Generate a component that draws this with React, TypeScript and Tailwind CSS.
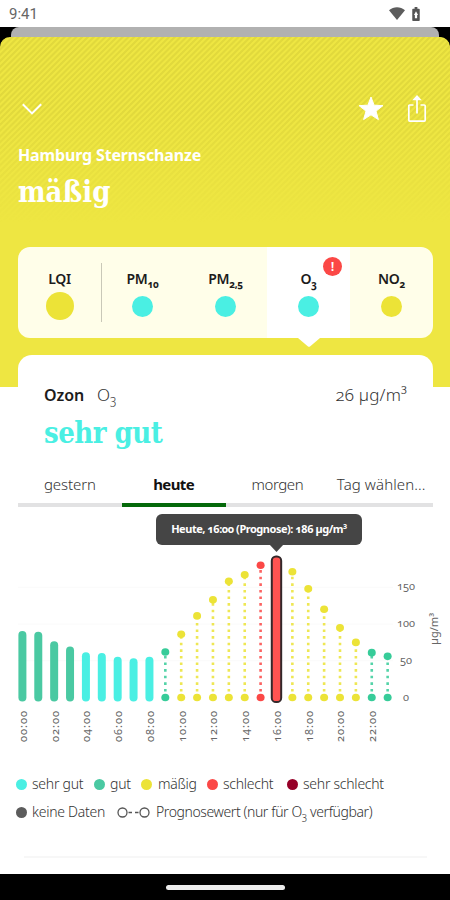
import { useState } from 'react'

type Level = 'sehrGut' | 'gut' | 'maessig' | 'schlecht' | 'sehrSchlecht'

const COLORS: Record<Level, string> = {
  sehrGut: '#4aefe3',
  gut: '#4ac9a2',
  maessig: '#ece337',
  schlecht: '#fb4846',
  sehrSchlecht: '#960028',
}

interface Measurement {
  value: number
  level: Level
  forecast?: boolean
}

const HOURS: Measurement[] = [
  { value: 85, level: 'gut' },
  { value: 84, level: 'gut' },
  { value: 71, level: 'gut' },
  { value: 64, level: 'gut' },
  { value: 56, level: 'sehrGut' },
  { value: 55, level: 'sehrGut' },
  { value: 50, level: 'sehrGut' },
  { value: 48, level: 'sehrGut' },
  { value: 50, level: 'sehrGut' },
  { value: 62, level: 'gut', forecast: true },
  { value: 86, level: 'maessig', forecast: true },
  { value: 111, level: 'maessig', forecast: true },
  { value: 133, level: 'maessig', forecast: true },
  { value: 158, level: 'maessig', forecast: true },
  { value: 167, level: 'maessig', forecast: true },
  { value: 180, level: 'schlecht', forecast: true },
  { value: 186, level: 'schlecht', forecast: true },
  { value: 171, level: 'maessig', forecast: true },
  { value: 148, level: 'maessig', forecast: true },
  { value: 120, level: 'maessig', forecast: true },
  { value: 95, level: 'maessig', forecast: true },
  { value: 75, level: 'maessig', forecast: true },
  { value: 61, level: 'gut', forecast: true },
  { value: 56, level: 'gut', forecast: true },
]

const SELECTED_HOUR = 16
const BASELINE = 145.5
const SCALE = 0.735

function xOf(hour: number) {
  return 22.4 + hour * 15.88
}

function yOf(value: number) {
  return BASELINE - value * SCALE
}

function StatusBar() {
  return (
    <div className="flex h-[27px] shrink-0 items-center justify-between bg-white pl-[9px] pr-[30px] text-[#666]">
      <span className="pt-px font-['Roboto'] text-[15px] leading-none">9:41</span>
      <div className="flex items-center gap-[7px]">
        <svg width="16" height="13" viewBox="0 0 16 13" fill="#5c5c5c">
          <path d="M0 3.2C4.6-.9 11.4-.9 16 3.2L8 13z" />
        </svg>
        <svg width="8" height="14" viewBox="0 0 8 15">
          <path d="M2.500 0h3v2H7.200q.8 0 .8.800V14.200q0 .8-.8.8H.8Q0 15 0 14.200V2.800Q0 2 .8 2h1.700z" fill="#555" />
          <path d="M4 4.500 1.800 8.500h1V12h2.400V8.500h1z" fill="#fff" />
        </svg>
      </div>
    </div>
  )
}

function Header() {
  return (
    <header className="px-[18px] pt-[60px] text-white">
      <div className="flex h-6 items-center justify-between">
        <svg className="ml-1" width="20" height="12" viewBox="0 0 20 12" fill="none" stroke="#fff" strokeWidth="2">
          <path d="M.8 1.200 10 10.400 19.200 1.200" />
        </svg>
        <div className="flex items-center gap-[23px] pr-[5px]">
          <svg className="mb-px" width="26" height="25" viewBox="0 0 26 25" fill="#fff" stroke="#fff" strokeLinejoin="round">
            <path d="M13 1l3.100 8.200 8.900.4-7 5.500 2.400 8.500L13 18.800 5.600 23.600 8 15.100 1 9.600l8.900-.4z" />
          </svg>
          <svg width="20" height="28" viewBox="0 0 20 28" fill="none" stroke="#fff" strokeWidth="1.700">
            <path d="M6.500 10H2.700Q1.800 10 1.800 11V25Q1.800 26.200 2.700 26.200H17.300Q18.200 26.200 18.200 25V11Q18.200 10 17.300 10H13.500M10 18.500V3" />
            <path d="M10 0 14.800 5.200H5.200z" fill="#fff" stroke="none" />
          </svg>
        </div>
      </div>
      <p className="mt-[24px] text-[16px] font-bold leading-[20px] tracking-[-0.15px]">Hamburg Sternschanze</p>
      <h1 className="mt-[9px] font-['DejaVu_Serif_Condensed','DejaVu_Serif',serif] text-[29px] font-bold leading-[36px] [font-stretch:condensed]">
        mäßig
      </h1>
    </header>
  )
}

const POLLUTANTS: { name: string; sub: string; level: Level; warning?: boolean }[] = [
  { name: 'LQI', sub: '', level: 'maessig' },
  { name: 'PM', sub: '10', level: 'sehrGut' },
  { name: 'PM', sub: '2,5', level: 'sehrGut' },
  { name: 'O', sub: '3', level: 'sehrGut', warning: true },
  { name: 'NO', sub: '2', level: 'maessig' },
]

function PollutantTabs() {
  const [active, setActive] = useState(3)

  return (
    <div className="ml-[18px] mr-[17px] grid h-[91px] grid-cols-5 rounded-[12px] bg-[#fffee9]">
      {POLLUTANTS.map((p, i) => (
        <button
          key={i}
          onClick={() => setActive(i)}
          className={`relative flex flex-col items-center pt-[22px] ${i === active ? 'bg-white' : ''}`}
        >
          <span className="flex h-[22px] items-baseline text-[14px] font-semibold leading-[20px] tracking-[-0.3px] text-[#1c1c1c]">
            {p.name}
            {p.sub && <span className="relative top-[4px] text-[10px] font-bold leading-none oldstyle-nums">{p.sub}</span>}
          </span>
          <span className="flex h-[30px] items-center">
            <span
              className={`rounded-full ${i === 0 ? 'size-[28px]' : 'size-[21px]'}`}
              style={{ backgroundColor: COLORS[p.level] }}
            />
          </span>
          {i === 0 && <span className="absolute right-[-1px] top-[16px] h-[59px] w-px bg-[#c9c8b8]" />}
          {p.warning && (
            <span className="absolute right-[8px] top-[10px] flex size-[19px] items-center justify-center rounded-full bg-[#fb4846] text-[13px] font-semibold leading-none text-white">
              !
            </span>
          )}
          {i === active && (
            <svg className="absolute left-1/2 top-[90.500px] -translate-x-1/2" width="22" height="9" viewBox="0 0 22 9" fill="#fff">
              <path d="M0 0h22L12 8.400q-1 .8-2 0z" />
            </svg>
          )}
        </button>
      ))}
    </div>
  )
}

const DAYS = [
  { label: 'gestern', style: 'tracking-[-0.1px]' },
  { label: 'heute', style: 'tracking-[-0.6px]' },
  { label: 'morgen', style: 'tracking-[-0.4px]' },
  { label: 'Tag wählen...', style: 'tracking-[0.1px]' },
]

function DayTabs() {
  const [day, setDay] = useState(1)

  return (
    <div className="grid grid-cols-4">
      {DAYS.map((d, i) => (
        <button
          key={d.label}
          onClick={() => setDay(i)}
          className={`whitespace-nowrap border-b-4 pb-[9px] text-[15px] leading-[20px] ${d.style} ${
            i === day ? 'border-[#05690a] font-bold text-[#111]' : 'border-[#e2e2e3] font-light text-[#333]'
          }`}
        >
          {d.label}
        </button>
      ))}
    </div>
  )
}

function Chart() {
  return (
    <div className="relative h-[208px]">
      <svg
        width="450"
        height="208"
        viewBox="0 0 450 208"
        className="block oldstyle-nums"
        fontFamily="'Noto Sans', sans-serif"
        fontSize="11"
        fill="#666"
      >
        {[50, 100, 150].map((v) => (
          <line key={v} x1="18" x2="393" y1={yOf(v)} y2={yOf(v)} stroke="#fafafa" />
        ))}
        {HOURS.map((h, i) => {
          const x = xOf(i)
          const y = yOf(h.value)
          if (i === SELECTED_HOUR) {
            return (
              <rect
                key={i}
                x={x - 4.7}
                y={y - 4.2}
                width="9.400"
                height={BASELINE - y + 8.8}
                rx="4.200"
                fill="#ff5351"
                stroke="#33282a"
                strokeWidth="2"
              />
            )
          }
          if (!h.forecast) {
            return (
              <rect key={i} x={x - 4} y={y - 4} width="8" height={BASELINE - y + 8} rx="4" fill={COLORS[h.level]} />
            )
          }
          const color = h.level === 'gut' ? '#37cc99' : COLORS[h.level]
          return (
            <g key={i} fill={color}>
              <line
                x1={x}
                x2={x}
                y1={BASELINE - 6}
                y2={y}
                stroke={color}
                strokeWidth="2.600"
                strokeDasharray="2.600 4"
                opacity=".85"
              />
              <ellipse cx={x} cy={y} rx="4" ry="3.800" />
              <ellipse cx={x} cy={BASELINE} rx="4" ry="3.800" />
            </g>
          )
        })}
        {HOURS.map((_, i) =>
          i % 2 === 0 ? (
            <text key={i} transform={`translate(${xOf(i) + 4.4} 190) rotate(-90)`} textLength="31">
              {String(i).padStart(2, '0')}:00
            </text>
          ) : null,
        )}
        {[0, 50, 100, 150].map((v) => (
          <text key={v} x="406" y={yOf(v) + 3} textAnchor="middle">
            {v}
          </text>
        ))}
        <text transform="translate(438 93) rotate(-90)" textLength="32">
          µg/m³
        </text>
      </svg>
      <div className="absolute left-[156px] top-[-38px] flex h-[31px] w-[206px] items-center justify-center rounded-[6px] bg-[#454545]">
        <span className="whitespace-nowrap text-[11px] font-bold tracking-[-0.47px] text-white oldstyle-nums">
          Heute, 16:00 (Prognose): 186 µg/m³
        </span>
        <svg className="absolute left-[113px] top-[30px]" width="15" height="8" viewBox="0 0 15 8" fill="#454545">
          <path d="M0 0h15L7.500 8z" />
        </svg>
      </div>
    </div>
  )
}

function Dot({ color }: { color: string }) {
  return <span className="size-[11px] shrink-0 rounded-full" style={{ backgroundColor: color }} />
}

function Legend() {
  return (
    <div className="flex flex-col gap-[8px] whitespace-nowrap pl-[16px] text-[14px] font-light leading-[20px] tracking-[-0.25px] text-[#333]">
      <div className="flex h-5">
        <span className="flex w-[78px] items-center gap-[5px]"><Dot color={COLORS.sehrGut} />sehr gut</span>
        <span className="flex w-[47px] items-center gap-[5px]"><Dot color={COLORS.gut} />gut</span>
        <span className="flex w-[66px] items-center gap-[6px]"><Dot color={COLORS.maessig} />mäßig</span>
        <span className="flex w-[80px] items-center gap-[5px]"><Dot color={COLORS.schlecht} />schlecht</span>
        <span className="flex items-center gap-[5px]"><Dot color={COLORS.sehrSchlecht} />sehr schlecht</span>
      </div>
      <div className="flex h-5">
        <span className="flex w-[101px] items-center gap-[5px]"><Dot color="#5c5c5c" />keine Daten</span>
        <span className="flex items-center gap-[6px]">
          <svg width="33" height="11" viewBox="0 0 33 11" fill="none" stroke="#555" strokeWidth="1.300">
            <circle cx="5.500" cy="5.500" r="4.500" />
            <circle cx="27.500" cy="5.500" r="4.500" />
            <path d="M11.500 5.500h3.500M18 5.500h3.500" />
          </svg>
          <span className="tracking-[-0.4px]">
            Prognosewert (nur für O<span className="relative top-[3px] text-[10px] leading-none oldstyle-nums">3</span> verfügbar)
          </span>
        </span>
      </div>
    </div>
  )
}

export default function App() {
  return (
    <div className="flex h-[900px] w-[450px] flex-col overflow-hidden bg-white font-['Noto_Sans','Open_Sans',sans-serif]">
      <StatusBar />
      <div className="h-[10px] shrink-0 bg-black px-[11px]">
        <div className="h-full rounded-t-[8px] bg-[#b1b1b1]" />
      </div>
      <div className="shrink-0 bg-[linear-gradient(#000_20px,#fff_20px)]">
        <div className="relative h-[350px] rounded-t-[10px] bg-[#eee642]">
          <div className="absolute inset-x-0 top-0 h-[185px] rounded-t-[10px] bg-[repeating-linear-gradient(135deg,#e1d93c_0,#e1d93c_1.300px,transparent_2.100px,transparent_3.300px,#e1d93c_4.100px)] [mask-image:linear-gradient(#000_40%,transparent)]" />
          <div className="relative">
            <Header />
            <div className="mt-[37px]">
              <PollutantTabs />
            </div>
          </div>
        </div>
      </div>
      <main className="relative -mt-[32px] flex min-h-0 flex-1 flex-col">
        <section className="ml-[18px] mr-[17px] rounded-t-[14px] bg-white pt-[28px]">
          <div className="flex h-6 items-baseline justify-between pl-[26px] pr-[26px] text-[17px] leading-[24px]">
            <div className="flex items-baseline">
              <span className="w-[53px] text-[16px] font-semibold tracking-[-0.1px] text-[#1c1c1c]">Ozon</span>
              <span className="font-light text-[#333]">
                O<span className="relative top-[3px] text-[12px] leading-none oldstyle-nums">3</span>
              </span>
            </div>
            <span className="font-light tracking-[0.2px] text-[#333] oldstyle-nums">26 µg/m³</span>
          </div>
          <h2 className="mt-[8px] pl-[26px] font-['DejaVu_Serif_Condensed','DejaVu_Serif',serif] text-[29px] font-bold leading-[36px] tracking-[-0.5px] text-[#4aefe3] [font-stretch:condensed]">
            sehr gut
          </h2>
          <div className="mt-[23px]">
            <DayTabs />
          </div>
        </section>
        <div className="mt-[45px]">
          <Chart />
        </div>
        <div className="mt-[14px]">
          <Legend />
        </div>
        <hr className="ml-[24px] mr-[23px] mt-[34px] border-t-2 border-[#f7f7f7]" />
      </main>
      <footer className="flex h-[26px] shrink-0 items-center justify-center bg-black">
        <div className="h-[5px] w-[119px] rounded-full bg-[#ececec]" />
      </footer>
    </div>
  )
}
